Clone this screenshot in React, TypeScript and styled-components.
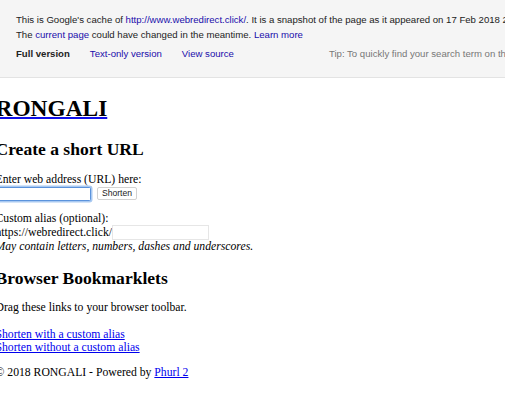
import React from "react";
import styled, { createGlobalStyle } from "styled-components";

const Global = createGlobalStyle`
  html, body { margin: 0; padding: 0; background: #fff; }
  body { width: 505px; height: 396px; overflow: hidden; }
`;

const CacheBar = styled.div`
  box-sizing: border-box;
  height: 78px;
  background: #f5f5f5;
  border-bottom: 1px solid #e3e3e3;
  padding: 11.5px 0 0 16px;
  font-family: "Liberation Sans", Arial, sans-serif;
  font-size: 9.6px;
  color: #222;
  white-space: nowrap;
  overflow: hidden;
`;

const CacheLine = styled.div`
  line-height: 15px;
`;

const CacheLink = styled.a`
  color: #1a0dab;
  text-decoration: none;
`;

const CacheNav = styled.div`
  display: flex;
  align-items: center;
  gap: 20px;
  margin-top: 4px;
  line-height: 15px;
`;

const NavItem = styled.span<{ $active?: boolean }>`
  font-weight: ${(p) => (p.$active ? "bold" : "normal")};
  color: ${(p) => (p.$active ? "#222" : "#1a0dab")};
`;

const Tip = styled.span`
  margin-left: 75px;
  color: #777;
`;

const Page = styled.div`
  margin-left: -4.5px;
  font-family: "Liberation Serif", "Times New Roman", serif;
  font-size: 11.7px;
  line-height: 13px;
  color: #000;
  white-space: nowrap;
`;

const Title = styled.h1`
  margin: 16.7px 0 0;
  font-size: 23.4px;
  line-height: 27px;
  font-weight: bold;
`;

const TitleLink = styled.a`
  color: #000;
  text-decoration: underline;
  text-decoration-color: #1010e8;
  text-decoration-thickness: 1.5px;
`;

const Heading = styled.h2<{ $mt: number }>`
  margin: ${(p) => p.$mt}px 0 0;
  font-size: 17.55px;
  line-height: 20px;
  font-weight: bold;
`;

const Line = styled.div<{ $mt?: number }>`
  margin-top: ${(p) => p.$mt ?? 0}px;
`;

const Note = styled.div`
  font-style: italic;
`;

const FieldRow = styled.div<{ $mt?: number }>`
  display: flex;
  align-items: center;
  height: 15px;
  margin-top: ${(p) => p.$mt ?? 0}px;
`;

const UrlInput = styled.div`
  box-sizing: border-box;
  width: 95.5px;
  height: 14px;
  background: #fff;
  border: 1px solid #5b93dc;
  border-radius: 1.5px;
  box-shadow: 0 0 0 1.5px #a9c9f1;
`;

const ShortenButton = styled.button`
  box-sizing: border-box;
  margin-left: 6px;
  width: 40px;
  height: 13px;
  padding: 0;
  background: #fff;
  border: 1px solid #d2d2d2;
  border-radius: 2px;
  font-family: "Liberation Sans", Arial, sans-serif;
  font-size: 8.6px;
  line-height: 11px;
  color: #222;
`;

const AliasInput = styled.div`
  box-sizing: border-box;
  width: 97px;
  height: 15px;
  background: #fff;
  border: 1px solid #e6e6e6;
`;

const Link = styled.a`
  color: #0000ee;
  text-decoration: underline;
`;

const LinkList = styled.div<{ $mt: number }>`
  display: flex;
  flex-direction: column;
  margin-top: ${(p) => p.$mt}px;
`;

export default function App() {
  return (
    <>
      <Global />
      <CacheBar>
        <CacheLine>
          This is Google's cache of{" "}
          <CacheLink href="#">http://www.webredirect.click/</CacheLink>. It is a
          snapshot of the page as it appeared on 17 Feb 2018 20:14:22 GMT.
        </CacheLine>
        <CacheLine>
          The <CacheLink href="#">current page</CacheLink> could have changed in
          the meantime. <CacheLink href="#">Learn more</CacheLink>
        </CacheLine>
        <CacheNav>
          <NavItem $active>Full version</NavItem>
          <NavItem>Text-only version</NavItem>
          <NavItem>View source</NavItem>
          <Tip>
            Tip: To quickly find your search term on this page, press Ctrl+F or
            ⌘-F (Mac) and use the find bar.
          </Tip>
        </CacheNav>
      </CacheBar>
      <Page>
        <Title>
          <TitleLink href="#">RONGALI</TitleLink>
        </Title>
        <Heading $mt={17.5}>Create a short URL</Heading>
        <Line $mt={13.8}>Enter web address (URL) here:</Line>
        <FieldRow $mt={0.5}>
          <UrlInput />
          <ShortenButton>Shorten</ShortenButton>
        </FieldRow>
        <Line $mt={11}>Custom alias (optional):</Line>
        <FieldRow>
          https://webredirect.click/
          <AliasInput />
        </FieldRow>
        <Note>May contain letters, numbers, dashes and underscores.</Note>
        <Heading $mt={14.4}>Browser Bookmarklets</Heading>
        <Line $mt={13}>Drag these links to your browser toolbar.</Line>
        <LinkList $mt={14}>
          <Link href="#">Shorten with a custom alias</Link>
          <Link href="#">Shorten without a custom alias</Link>
        </LinkList>
        <Line $mt={12}>
          © 2018 RONGALI - Powered by <Link href="#">Phurl 2</Link>
        </Line>
      </Page>
    </>
  );
}
